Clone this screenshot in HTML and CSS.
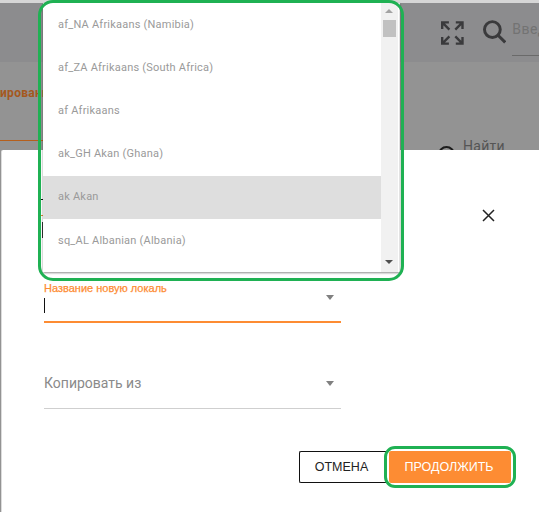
FILE: index.html
```html
<!DOCTYPE html>
<html lang="ru">
<head>
<title>Новая локаль</title>
<link rel="stylesheet" href="styles.css">
</head>
<body>

    <div class="page">

        <header class="topbar">
            <svg class="icon-expand" width="23" height="24" viewBox="0 0 23 24">
                <path d="M1.2 8V1.2H8M2 2l6.5 6.5"/>
                <path d="M21.8 8V1.2H15M21 2l-6.5 6.5"/>
                <path d="M1.2 16v6.8H8M2 22l6.5-6.5"/>
                <path d="M21.8 16v6.8H15M21 22l-6.5-6.5"/>
            </svg>
            <svg class="icon-search" width="24" height="24" viewBox="0 0 24 24">
                <circle cx="9.5" cy="9.5" r="8"/>
                <path d="M15.5 15.5l7 7"/>
            </svg>
            <div class="topbar-search">Введите</div>
        </header>

        <div class="content">
            <div class="tab-row">
                <span class="tab-name">ирование локали</span>
            </div>
            <div class="find-row">
                <span class="find-circle"></span>
                <span class="find-text">Найти</span>
            </div>
        </div>

    </div>

    <div class="dialog">
        <div class="dialog-head">
            <span class="title-bit-a"></span>
            <span class="title-rule"></span>
            <span class="title-bit-b"></span>
            <svg class="icon-close" width="13" height="13" viewBox="0 0 13 13">
                <path d="M1 1l11 11M12 1L1 12"/>
            </svg>
        </div>

        <div class="field field-active">
            <label class="field-label">Название новую локаль</label>
            <div class="field-input">
                <span class="caret"></span>
                <span class="arrow"></span>
            </div>
        </div>

        <div class="field field-plain">
            <div class="field-input">
                <span class="placeholder">Копировать из</span>
                <span class="arrow"></span>
            </div>
        </div>

        <div class="dialog-actions">
            <button class="btn btn-cancel">ОТМЕНА</button>
            <button class="btn btn-next">ПРОДОЛЖИТЬ</button>
        </div>
    </div>

    <div class="locale-list">
        <ul class="locale-items">
            <li>af_NA Afrikaans (Namibia)</li>
            <li>af_ZA Afrikaans (South Africa)</li>
            <li>af Afrikaans</li>
            <li>ak_GH Akan (Ghana)</li>
            <li class="selected">ak Akan</li>
            <li class="last">sq_AL Albanian (Albania)</li>
        </ul>
        <div class="scrollbar">
            <span class="scroll-up"></span>
            <span class="scroll-thumb"></span>
            <span class="scroll-down"></span>
        </div>
    </div>

    <!-- green annotation marks -->
    <div class="mark mark-list"></div>
    <div class="mark mark-btn"></div>

</body>
</html>
```

FILE: styles.css
```css
html, body {
    margin: 0;
    height: 512px;
    overflow: hidden;
    background: #fff;
    font-family: "Liberation Sans", Arial, sans-serif;
}

.page {
    height: 512px;
    background: #939393;
    border-top: 3px solid #d6d6d6;
    box-sizing: border-box;
}

.topbar {
    height: 59px;
    background: #8c8c8e;
    display: flex;
    align-items: flex-start;
    overflow: hidden;
}

.icon-expand {
    margin: 18px 0 0 441px;
    fill: none;
    stroke: #3a3a3c;
    stroke-width: 2.4;
}

.icon-search {
    margin: 17px 0 0 19px;
    fill: none;
    stroke: #3a3a3c;
    stroke-width: 3;
}

.topbar-search {
    margin: 13px 0 0 6px;
    width: 27px;
    height: 39px;
    line-height: 27px;
    font-family: Roboto, sans-serif;
    font-size: 14px;
    letter-spacing: 0.4px;
    color: #737373;
    white-space: nowrap;
    overflow: hidden;
    border-bottom: 1px solid #6a6a6a;
}

.content {
    height: 88px;
    overflow: hidden;
}

.tab-row {
    width: 60px;
    height: 78px;
    border-bottom: 1px solid #b55f1c;
    line-height: 60px;
    white-space: nowrap;
    overflow: hidden;
}

.tab-name {
    font-family: Roboto, sans-serif;
    font-size: 12px;
    font-weight: 700;
    letter-spacing: 0.3px;
    color: #a5581e;
}

.find-row {
    display: flex;
    margin-left: 438px;
}

.find-circle {
    width: 13px;
    height: 13px;
    margin-top: 5px;
    border: 2px solid #1c1c1c;
    border-radius: 50%;
}

.find-text {
    margin: -3px 0 0 8px;
    font-family: Roboto, sans-serif;
    font-size: 14px;
    letter-spacing: 0.3px;
    color: #555;
}

.dialog {
    position: absolute;
    left: 1px;
    top: 150px;
    width: 538px;
    height: 362px;
    box-sizing: border-box;
    padding-left: 42px;
    background: #fff;
    border-left: 1px solid #dcdcdc;
    border-radius: 2px 0 0 0;
}

.dialog-head {
    position: relative;
    height: 130px;
}

.title-bit-a {
    position: absolute;
    left: -3px;
    top: 49px;
    width: 3px;
    height: 1px;
    background: #111;
}

.title-rule {
    position: absolute;
    left: -3px;
    top: 65px;
    width: 3px;
    height: 1px;
    background: #e08a3a;
}

.title-bit-b {
    position: absolute;
    left: -2px;
    top: 72px;
    width: 1px;
    height: 16px;
    background: #333;
}

.icon-close {
    position: absolute;
    left: 438px;
    top: 59px;
    fill: none;
    stroke: #222;
    stroke-width: 1.5;
}

.field {
    width: 297px;
    box-sizing: border-box;
}

.field-active {
    height: 43px;
    border-bottom: 2px solid #fd8c33;
}

.field-label {
    display: block;
    height: 16px;
    font-size: 11px;
    line-height: 17px;
    color: #fd8c33;
    -webkit-text-stroke: 0.25px #fd8c33;
    white-space: nowrap;
}

.field-input {
    position: relative;
}

.caret {
    display: block;
    width: 1px;
    height: 15px;
    margin-top: 2px;
    background: #111;
}

.arrow {
    position: absolute;
    right: 7px;
    width: 0;
    height: 0;
    border: 4px solid transparent;
    border-top: 5px solid #808080;
    border-bottom: none;
}

.field-active .arrow {
    top: -3px;
}

.field-plain {
    height: 44px;
    margin-top: 42px;
    border-bottom: 1px solid #cfcfcf;
}

.field-plain .arrow {
    top: 16px;
}

.placeholder {
    display: block;
    line-height: 36px;
    font-family: Roboto, sans-serif;
    font-size: 14px;
    color: #8a8a8a;
}

.dialog-actions {
    display: flex;
    margin: 42px 0 0 255px;
}

.btn {
    height: 32px;
    padding: 0;
    font-family: "Liberation Sans", Arial, sans-serif;
    font-size: 12.5px;
    cursor: pointer;
}

.btn-cancel {
    width: 90px;
    padding-right: 6px;
    background: #fff;
    color: #222;
    border: 1px solid #111;
    border-right: none;
    border-radius: 2px 0 0 2px;
}

.btn-next {
    width: 122px;
    padding-right: 2px;
    background: #fd8c33;
    color: #fff;
    border: none;
    border-radius: 2px;
}

.locale-list {
    position: absolute;
    left: 43px;
    top: 3px;
    width: 356px;
    height: 269px;
    display: flex;
    overflow: hidden;
    background: #fff;
    border-right: 1px solid #e2e2e2;
    box-shadow: 0 1px 2px rgba(0, 0, 0, 0.45);
}

.locale-items {
    flex: 1;
    margin: 1px 0 0;
    padding: 0;
    list-style: none;
}

.locale-items li {
    height: 43px;
    padding-left: 15px;
    line-height: 41px;
    font-family: Roboto, sans-serif;
    font-size: 11px;
    letter-spacing: 0.22px;
    color: #9a9a9a;
}

.locale-items li.selected {
    background: #dedede;
}

.locale-items li.last {
    line-height: 43px;
}

.scrollbar {
    position: relative;
    width: 17px;
    margin-right: 1px;
    background: #f1f1f1;
}

.scroll-up {
    position: absolute;
    left: 4px;
    top: 6px;
    border: 4px solid transparent;
    border-top: none;
    border-bottom: 4px solid #a3a3a3;
}

.scroll-thumb {
    position: absolute;
    left: 2px;
    top: 17px;
    width: 13px;
    height: 17px;
    background: #c1c1c1;
}

.scroll-down {
    position: absolute;
    left: 4px;
    top: 257px;
    border: 4px solid transparent;
    border-bottom: none;
    border-top: 4px solid #505050;
}

.mark {
    position: absolute;
    box-sizing: border-box;
    border: 3px solid #1fb153;
}

.mark-list {
    left: 38px;
    top: 0;
    width: 366px;
    height: 281px;
    border-radius: 15px;
}

.mark-btn {
    left: 384px;
    top: 446px;
    width: 132px;
    height: 42px;
    border-radius: 11px;
}
```
